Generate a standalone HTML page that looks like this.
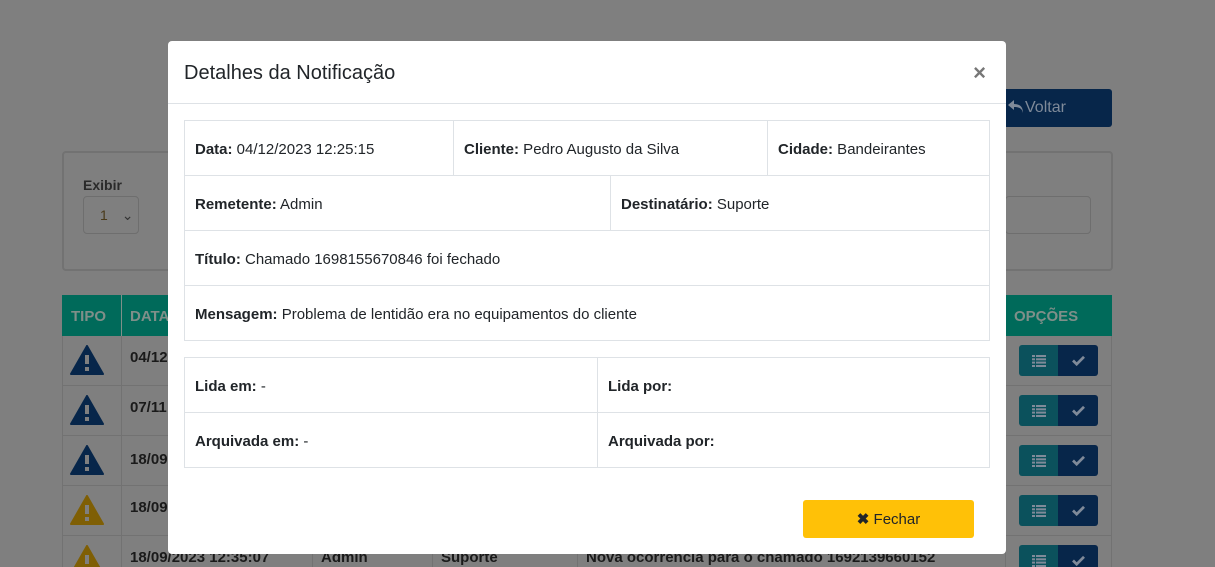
<!DOCTYPE html>
<html><head><meta charset="utf-8"><style>
*{box-sizing:border-box;margin:0;padding:0}
html,body{width:1215px;height:567px;overflow:hidden}
body{background:#7f7f7f;font-family:"Liberation Sans",sans-serif;color:#212529;position:relative;font-size:14px}
.abs{position:absolute}
.voltar{left:1003px;top:89px;width:109px;height:38px;background:#07264a;border-radius:3px;color:#7f8a99;font-size:16px;line-height:38px;padding-left:22px}
.card{left:62px;top:151px;width:1051px;height:120px;border:2px solid #727272;border-radius:4px}
.th{top:295px;height:41px;background:#006a5a;color:#7f8f89;font-weight:bold;font-size:15px;line-height:43px}
.row{left:62px;width:1050px;height:50px;border-bottom:1px solid #727272}
.tri{left:70px;width:34px;height:30px}
.btns{left:1019px;width:79px;height:31px;border-radius:3px;overflow:hidden;display:flex}
.btns div{width:39px;height:31px;background:#0b515c;display:flex;align-items:center;justify-content:center}
.btns div+div{width:40px;background:#07264a}
.modal{left:168px;top:41px;width:838px;height:513px;background:#fff;border-radius:4px}
.hdr{height:63px;border-bottom:1px solid #dee2e6;padding:21px 16px;font-size:20px;color:#212529}
.x{right:20px;top:19px;font-size:22px;color:#777;font-weight:bold}
table{position:absolute;left:16px;border-collapse:collapse;width:806px}
td{border:1px solid #dee2e6;height:55px;padding:3px 10px 0;font-size:15px}
b{font-weight:bold}
.fechar{left:635px;top:459px;width:171px;height:38px;background:#ffc107;border-radius:3px;text-align:center;line-height:40px;font-size:15px;color:#212529}
</style></head><body>
<div class="abs voltar">Voltar</div>
<svg class="abs" style="left:1007px;top:99px" width="18" height="16" viewBox="0 0 18 16"><path d="M7 1L1 6l6 5V8c5 0 8 1 9 6 0-6-3-9-9-9z" fill="#7f8a99"/></svg>
<div class="abs card"></div>
<div class="abs" style="left:83px;top:177px;font-weight:bold;color:#2a2a2a;font-size:14px">Exibir</div>
<div class="abs" style="left:83px;top:196px;width:56px;height:38px;border:1px solid #6e6e6e;border-radius:4px;color:#4a3a1a;padding:10px 0 0 16px">1 <span style="margin-left:10px;color:#333">⌄</span></div>
<div class="abs" style="left:1005px;top:196px;width:86px;height:38px;border:1px solid #6e6e6e;border-radius:4px"></div>
<div class="abs th" style="left:62px;width:1050px"></div>
<div class="abs th" style="left:71px;background:none">TIPO</div>
<div class="abs th" style="left:121px;width:1px;background:#7f8f89"></div>
<div class="abs th" style="left:130px;background:none">DATA</div>
<div class="abs th" style="left:1014px;background:none">OPÇÕES</div>
<div class="abs row" style="top:336px"></div>
<div class="abs row" style="top:386px"></div>
<div class="abs row" style="top:436px"></div>
<div class="abs row" style="top:486px"></div>
<div class="abs" style="left:121px;top:336px;width:1px;height:231px;background:#727272"></div>
<div class="abs" style="left:1005px;top:336px;width:1px;height:231px;background:#727272"></div>
<div class="abs" style="left:62px;top:336px;width:1px;height:231px;background:#727272"></div>
<div class="abs" style="left:1111px;top:336px;width:1px;height:231px;background:#727272"></div>
<svg class="abs tri" style="top:345px" viewBox="0 0 34 30"><path d="M17 1L33 29H1z" fill="#07264a" stroke="#07264a" stroke-linejoin="round" stroke-width="2"/><rect x="15" y="10" width="4" height="9" fill="#7f7f7f"/><rect x="15" y="22" width="4" height="4" fill="#7f7f7f"/></svg>
<svg class="abs tri" style="top:395px" viewBox="0 0 34 30"><path d="M17 1L33 29H1z" fill="#07264a" stroke="#07264a" stroke-linejoin="round" stroke-width="2"/><rect x="15" y="10" width="4" height="9" fill="#7f7f7f"/><rect x="15" y="22" width="4" height="4" fill="#7f7f7f"/></svg>
<svg class="abs tri" style="top:445px" viewBox="0 0 34 30"><path d="M17 1L33 29H1z" fill="#07264a" stroke="#07264a" stroke-linejoin="round" stroke-width="2"/><rect x="15" y="10" width="4" height="9" fill="#7f7f7f"/><rect x="15" y="22" width="4" height="4" fill="#7f7f7f"/></svg>
<svg class="abs tri" style="top:495px" viewBox="0 0 34 30"><path d="M17 1L33 29H1z" fill="#7f5f05" stroke="#7f5f05" stroke-linejoin="round" stroke-width="2"/><rect x="15" y="10" width="4" height="9" fill="#7f7f7f"/><rect x="15" y="22" width="4" height="4" fill="#7f7f7f"/></svg>
<svg class="abs tri" style="top:545px" viewBox="0 0 34 30"><path d="M17 1L33 29H1z" fill="#7f5f05" stroke="#7f5f05" stroke-linejoin="round" stroke-width="2"/><rect x="15" y="10" width="4" height="9" fill="#7f7f7f"/></svg>
<div class="abs" style="left:130px;top:349px;font-weight:bold;font-size:15px;color:#1a1a1a">04/12</div>
<div class="abs" style="left:130px;top:399px;font-weight:bold;font-size:15px;color:#1a1a1a">07/11</div>
<div class="abs" style="left:130px;top:451px;font-weight:bold;font-size:15px;color:#1a1a1a">18/09</div>
<div class="abs" style="left:130px;top:499px;font-weight:bold;font-size:15px;color:#1a1a1a">18/09</div>
<div class="abs" style="left:130px;top:549px;font-weight:bold;font-size:15px;color:#1a1a1a">18/09/2023 12:35:07</div>
<div class="abs" style="left:312px;top:536px;width:1px;height:31px;background:#727272"></div>
<div class="abs" style="left:432px;top:536px;width:1px;height:31px;background:#727272"></div>
<div class="abs" style="left:577px;top:536px;width:1px;height:31px;background:#727272"></div>
<div class="abs" style="left:321px;top:549px;font-weight:bold;font-size:15px;color:#1a1a1a">Admin</div>
<div class="abs" style="left:441px;top:549px;font-weight:bold;font-size:15px;color:#1a1a1a">Suporte</div>
<div class="abs" style="left:586px;top:549px;font-weight:bold;font-size:15px;color:#1a1a1a">Nova ocorrencia para o chamado 1692139660152</div>

<svg width="0" height="0" style="position:absolute"><defs>
<symbol id="li" viewBox="0 0 14 12"><rect x="0" y="0" width="3" height="2"/><rect x="4" y="0" width="10" height="2"/><rect x="0" y="3.3" width="3" height="2"/><rect x="4" y="3.3" width="10" height="2"/><rect x="0" y="6.6" width="3" height="2"/><rect x="4" y="6.6" width="10" height="2"/><rect x="0" y="10" width="3" height="2"/><rect x="4" y="10" width="10" height="2"/></symbol>
<symbol id="ck" viewBox="0 0 14 12"><path d="M1 6l4 4 8-8" fill="none" stroke-width="3"/></symbol>
</defs></svg>
<div class="abs btns" style="top:345px"><div><svg width="14" height="12" fill="#7f8a99"><use href="#li"/></svg></div><div><svg width="13" height="11" stroke="#7f8a99"><use href="#ck"/></svg></div></div>
<div class="abs btns" style="top:395px"><div><svg width="14" height="12" fill="#7f8a99"><use href="#li"/></svg></div><div><svg width="13" height="11" stroke="#7f8a99"><use href="#ck"/></svg></div></div>
<div class="abs btns" style="top:445px"><div><svg width="14" height="12" fill="#7f8a99"><use href="#li"/></svg></div><div><svg width="13" height="11" stroke="#7f8a99"><use href="#ck"/></svg></div></div>
<div class="abs btns" style="top:495px"><div><svg width="14" height="12" fill="#7f8a99"><use href="#li"/></svg></div><div><svg width="13" height="11" stroke="#7f8a99"><use href="#ck"/></svg></div></div>
<div class="abs btns" style="top:545px"><div><svg width="14" height="12" fill="#7f8a99"><use href="#li"/></svg></div><div><svg width="13" height="11" stroke="#7f8a99"><use href="#ck"/></svg></div></div>

<div class="abs modal">
<div class="hdr">Detalhes da Notificação</div>
<div class="abs x">×</div>
<table style="top:79px">
<tr><td style="width:269px"><b>Data:</b> 04/12/2023 12:25:15</td><td style="width:314px"><b>Cliente:</b> Pedro Augusto da Silva</td><td><b>Cidade:</b> Bandeirantes</td></tr>
</table>
<table style="top:134px">
<tr><td style="width:426px"><b>Remetente:</b> Admin</td><td><b>Destinatário:</b> Suporte</td></tr>
<tr><td colspan="2"><b>Título:</b> Chamado 1698155670846 foi fechado</td></tr>
<tr><td colspan="2"><b>Mensagem:</b> Problema de lentidão era no equipamentos do cliente</td></tr>
</table>
<table style="top:316px">
<tr><td style="width:413px"><b>Lida em:</b> -</td><td><b>Lida por:</b></td></tr>
<tr><td><b>Arquivada em:</b> -</td><td><b>Arquivada por:</b></td></tr>
</table>
<div class="abs fechar"><b>✖</b> Fechar</div>
</div>
</body></html>
